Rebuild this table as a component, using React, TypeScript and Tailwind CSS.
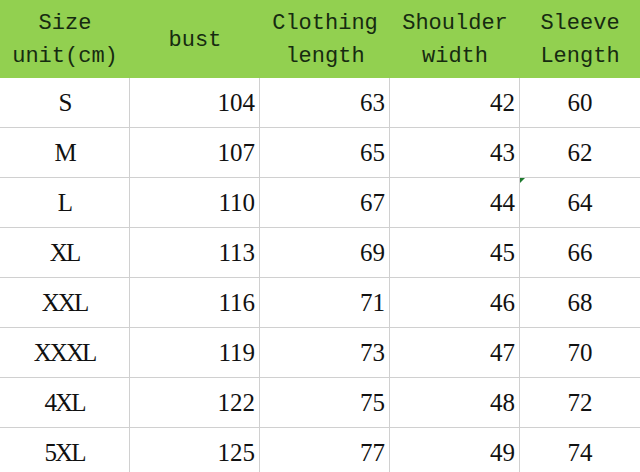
import React from 'react';

const headers: string[][] = [
  ['Size', 'unit(cm)'],
  ['bust'],
  ['Clothing', 'length'],
  ['Shoulder', 'width'],
  ['Sleeve', 'Length'],
];

const rows: (string | number)[][] = [
  ['S', 104, 63, 42, 60],
  ['M', 107, 65, 43, 62],
  ['L', 110, 67, 44, 64],
  ['XL', 113, 69, 45, 66],
  ['XXL', 116, 71, 46, 68],
  ['XXXL', 119, 73, 47, 70],
  ['4XL', 122, 75, 48, 72],
  ['5XL', 125, 77, 49, 74],
];

const App: React.FC = () => {
  return (
    <div className="w-[640px] h-[472px] overflow-hidden bg-white">
      <div className="grid grid-cols-[130px_130px_130px_130px_120px] h-[78px] bg-[#92d050] text-[#162b10] font-['Liberation_Mono',monospace] text-[22px] leading-[33px]">
        {headers.map((lines, i) => (
          <div key={i} className="flex flex-col items-center justify-center pt-[2px]">
            {lines.map((l) => (
              <span key={l}>{l}</span>
            ))}
          </div>
        ))}
      </div>
      <div className="font-['Liberation_Serif',serif] text-[25px] text-[#111111]">
        {rows.map((row, r) => (
          <div key={r} className="grid grid-cols-[130px_130px_130px_130px_120px] h-[50px] border-b border-[#d0d0d0]">
            {row.map((cell, c) => (
              <div
                key={c}
                className={`relative flex items-center pt-[1px] ${c === 4 ? '' : 'border-r border-[#d0d0d0]'} ${
                  c === 0 || c === 4 ? 'justify-center' : 'justify-end pr-[4px]'
                } ${c === 0 ? 'tracking-[-2px]' : ''}`}
              >
                {r === 2 && c === 4 && (
                  <span className="absolute left-0 top-0 w-0 h-0 border-t-[5px] border-r-[5px] border-t-[#1e7a2e] border-r-transparent" />
                )}
                {cell}
              </div>
            ))}
          </div>
        ))}
      </div>
    </div>
  );
};

export default App;
